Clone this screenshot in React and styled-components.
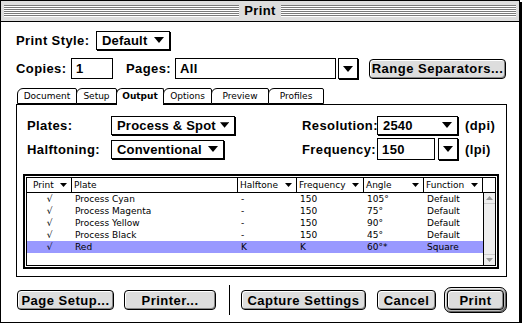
import React from "react";
import styled, { createGlobalStyle } from "styled-components";

const CHICAGO = `"Liberation Sans", Arial, sans-serif`;
const GENEVA = `"DejaVu Sans", Verdana, sans-serif`;

const GlobalStyle = createGlobalStyle`
  html, body { margin: 0; padding: 0; background: #fff; }
  * { box-sizing: border-box; }
`;

// 아래 삼각형 (팝업 / 헤더 화살표)
const Tri = ({ w = 9, h = 5, color = "#000", up }) => (
  <svg width={w} height={h} viewBox={`0 0 ${w} ${h}`} style={{ display: "block" }}>
    <polygon
      points={up ? `0,${h} ${w},${h} ${w / 2},0` : `0,0 ${w},0 ${w / 2},${h}`}
      fill={color}
    />
  </svg>
);

const Window = styled.div`
  width: 520px;
  height: 323px;
  border: 1px solid #000;
  box-shadow: 2px 2px 0 #000;
  background: #fff;
  display: flex;
  flex-direction: column;
  font-family: ${CHICAGO};
  font-weight: bold;
  font-size: 13px;
  color: #000;
`;

const TitleBar = styled.div`
  height: 21px;
  flex: none;
  background: #ddd;
  border-bottom: 1px solid #000;
  display: flex;
  align-items: center;
  padding: 0 3px;
`;

const Stripes = styled.div`
  flex: 1;
  height: 12px;
  background: repeating-linear-gradient(#7a7a7a 0 1px, #fff 1px 2px);
`;

const Title = styled.div`
  padding: 0 5px;
  font-size: 13px;
  letter-spacing: 0.4px;
  line-height: 14px;
`;

const Body = styled.div`
  flex: 1;
  display: flex;
  flex-direction: column;
  padding: 8px 12px 0 15px;
`;

const Row = styled.div`
  display: flex;
  align-items: center;
  height: ${(p) => p.$h || 21}px;
  margin-top: ${(p) => p.$mt || 0}px;
  padding-left: ${(p) => p.$pl || 0}px;
`;

const Label = styled.div`
  width: ${(p) => p.$w}px;
  flex: none;
  letter-spacing: 0.4px;
  white-space: nowrap;
`;

const Popup = styled.div`
  width: ${(p) => p.$w}px;
  height: 19px;
  flex: none;
  border: 1px solid #000;
  box-shadow: 1px 1px 0 #000;
  background: #fff;
  display: flex;
  align-items: center;
  justify-content: space-between;
  gap: 4px;
  padding: 0 5px;
  letter-spacing: 0.2px;
  white-space: nowrap;
`;

const Field = styled.div`
  width: ${(p) => p.$w}px;
  height: ${(p) => p.$h || 21}px;
  flex: none;
  border: 1px solid #000;
  background: #fff;
  display: flex;
  align-items: center;
  padding-left: 4px;
  letter-spacing: 0.4px;
`;

const ArrowBtn = styled.div`
  width: 20px;
  height: ${(p) => p.$h || 21}px;
  flex: none;
  margin-left: ${(p) => p.$ml || 2}px;
  border: 1px solid #000;
  box-shadow: 1px 1px 0 #000;
  background: #fff;
  display: flex;
  align-items: center;
  justify-content: center;
`;

const Button = styled.div`
  width: ${(p) => p.$w}px;
  height: 20px;
  flex: none;
  margin-left: ${(p) => p.$ml || 0}px;
  border: 1px solid #000;
  border-radius: 4px;
  background: #ddd;
  box-shadow: inset 1px 1px 0 #fff, inset -1px -1px 0 #888;
  display: flex;
  align-items: center;
  justify-content: center;
  letter-spacing: 0.5px;
  white-space: nowrap;
`;

const DefaultRing = styled.div`
  margin-left: ${(p) => p.$ml || 0}px;
  padding: 2px;
  border: 1px solid #000;
  border-radius: 7px;
  background: #bbb;
  box-shadow: inset 1px 1px 0 #eee, inset -1px -1px 0 #666;
`;

const Unit = styled.div`
  margin-left: 7px;
  letter-spacing: 0.4px;
`;

const Tabs = styled.div`
  display: flex;
  align-items: flex-end;
  height: 16px;
  margin-top: 9px;
  position: relative;
  z-index: 1;
`;

const Tab = styled.div`
  width: ${(p) => p.$w}px;
  height: ${(p) => (p.$active ? 17 : 16)}px;
  margin-left: -1px;
  margin-bottom: ${(p) => (p.$active ? -1 : 0)}px;
  padding-top: 2px;
  border: 1px solid #000;
  border-bottom: ${(p) => (p.$active ? "none" : "1px solid #000")};
  border-radius: 6px 2px 0 0;
  background: #fff;
  font-family: ${GENEVA};
  font-size: 9px;
  font-weight: ${(p) => (p.$active ? "bold" : "normal")};
  line-height: 11px;
  text-align: center;
  &:first-child { margin-left: 1px; }
`;

const Panel = styled.div`
  height: 173px;
  border: 1px solid #000;
  display: flex;
  flex-direction: column;
  padding-top: 10px;
`;

const LeftGroup = styled.div`
  width: 275px;
  flex: none;
  display: flex;
  align-items: center;
`;

const TableFrame = styled.div`
  width: 476px;
  margin: 14px 0 0 6px;
  border: 2px solid #000;
  padding: 1px;
`;

const TableInner = styled.div`
  border: 1px solid #000;
  font-family: ${GENEVA};
  font-weight: normal;
  font-size: 9px;
`;

const HeadRow = styled.div`
  display: flex;
  height: 15px;
  border-bottom: 1px solid #000;
`;

const HeadCell = styled.div`
  width: ${(p) => p.$w}px;
  flex: none;
  border-right: ${(p) => (p.$last ? "none" : "1px solid #000")};
  display: flex;
  align-items: center;
  justify-content: space-between;
  padding: 0 4px 0 ${(p) => p.$pl || 2}px;
  white-space: nowrap;
  overflow: hidden;
`;

const TBody = styled.div`
  display: flex;
  height: 72px;
`;

const Rows = styled.div`
  flex: 1;
  display: flex;
  flex-direction: column;
`;

const DataRow = styled.div`
  display: flex;
  height: 12px;
  align-items: center;
  background: ${(p) => (p.$sel ? "#9999ff" : "transparent")};
`;

const Cell = styled.div`
  width: ${(p) => p.$w}px;
  flex: none;
  padding-left: ${(p) => (p.$center ? 0 : 3)}px;
  text-align: ${(p) => (p.$center ? "center" : "left")};
  white-space: nowrap;
  line-height: 12px;
`;

const Scroll = styled.div`
  width: 12px;
  flex: none;
  border-left: 1px solid #000;
  background: #eee;
  display: flex;
  flex-direction: column;
  justify-content: space-between;
`;

const ScrollArrow = styled.div`
  height: 11px;
  display: flex;
  align-items: center;
  justify-content: center;
  border-${(p) => (p.$up ? "bottom" : "top")}: 1px solid #ccc;
`;

const ButtonRow = styled.div`
  display: flex;
  align-items: center;
  height: 30px;
  margin-top: 8px;
`;

const Divider = styled.div`
  width: 1px;
  height: 30px;
  background: #000;
  margin-left: 13px;
`;

const cols = [
  { key: "print", title: "Print", w: 45, pl: 6 },
  { key: "plate", title: "Plate", w: 166, noArrow: true },
  { key: "half", title: "Halftone", w: 59 },
  { key: "freq", title: "Frequency", w: 67 },
  { key: "angle", title: "Angle", w: 60 },
  { key: "func", title: "Function", w: 59 },
];

const plates = [
  { plate: "Process Cyan", half: "-", freq: "150", angle: "105°", func: "Default" },
  { plate: "Process Magenta", half: "-", freq: "150", angle: "75°", func: "Default" },
  { plate: "Process Yellow", half: "-", freq: "150", angle: "90°", func: "Default" },
  { plate: "Process Black", half: "-", freq: "150", angle: "45°", func: "Default" },
  { plate: "Red", half: "K", freq: "K", angle: "60°*", func: "Square", sel: true },
];

const tabs = [
  { name: "Document", w: 60 },
  { name: "Setup", w: 41 },
  { name: "Output", w: 48, active: true },
  { name: "Options", w: 49 },
  { name: "Preview", w: 58 },
  { name: "Profiles", w: 56 },
];

const App = () => {
  return (
    <>
      <GlobalStyle />
      <Window>
        <TitleBar>
          <Stripes />
          <Title>Print</Title>
          <Stripes />
        </TitleBar>
        <Body>
          <Row $h={20}>
            <Label $w={80}>Print Style:</Label>
            <Popup $w={74}>
              Default <Tri w={10} h={6} />
            </Popup>
          </Row>
          <Row $mt={8}>
            <Label $w={55}>Copies:</Label>
            <Field $w={42}>1</Field>
            <Label $w={49} style={{ marginLeft: 13 }}>Pages:</Label>
            <Field $w={161}>All</Field>
            <ArrowBtn>
              <Tri w={10} h={6} />
            </ArrowBtn>
            <Button $w={137} $ml={11}>Range Separators...</Button>
          </Row>

          <Tabs>
            {tabs.map((t) => (
              <Tab key={t.name} $w={t.w} $active={t.active}>
                {t.name}
              </Tab>
            ))}
          </Tabs>
          <Panel>
            <Row $h={20} $pl={10}>
              <LeftGroup>
                <Label $w={84}>Plates:</Label>
                <Popup $w={124}>
                  Process &amp; Spot <Tri w={10} h={6} />
                </Popup>
              </LeftGroup>
              <Label $w={75}>Resolution:</Label>
              <Popup $w={81}>
                2540 <Tri w={10} h={6} />
              </Popup>
              <Unit>(dpi)</Unit>
            </Row>
            <Row $h={22} $mt={3} $pl={10}>
              <LeftGroup>
                <Label $w={84}>Halftoning:</Label>
                <Popup $w={113}>
                  Conventional <Tri w={10} h={6} />
                </Popup>
              </LeftGroup>
              <Label $w={75}>Frequency:</Label>
              <Field $w={58} $h={22}>150</Field>
              <ArrowBtn $h={22} $ml={3}>
                <Tri w={10} h={6} />
              </ArrowBtn>
              <Unit>(lpi)</Unit>
            </Row>

            <TableFrame>
              <TableInner>
                <HeadRow>
                  {cols.map((c) => (
                    <HeadCell key={c.key} $w={c.w} $pl={c.pl}>
                      <span>{c.title}</span>
                      {!c.noArrow && <Tri w={7} h={4} />}
                    </HeadCell>
                  ))}
                  <HeadCell $w={12} $last />
                </HeadRow>
                <TBody>
                  <Rows>
                    {plates.map((r) => (
                      <DataRow key={r.plate} $sel={r.sel}>
                        <Cell $w={45} $center>√</Cell>
                        <Cell $w={166}>{r.plate}</Cell>
                        <Cell $w={59}>{r.half}</Cell>
                        <Cell $w={67}>{r.freq}</Cell>
                        <Cell $w={60}>{r.angle}</Cell>
                        <Cell $w={59}>{r.func}</Cell>
                      </DataRow>
                    ))}
                  </Rows>
                  <Scroll>
                    <ScrollArrow $up>
                      <Tri w={7} h={4} color="#999" up />
                    </ScrollArrow>
                    <ScrollArrow>
                      <Tri w={7} h={4} color="#999" />
                    </ScrollArrow>
                  </Scroll>
                </TBody>
              </TableInner>
            </TableFrame>
          </Panel>

          <ButtonRow>
            <Button $w={97} $ml={1}>Page Setup...</Button>
            <Button $w={92} $ml={10}>Printer...</Button>
            <Divider />
            <Button $w={125} $ml={11}>Capture Settings</Button>
            <Button $w={59} $ml={11}>Cancel</Button>
            <DefaultRing $ml={8}>
              <Button $w={57}>Print</Button>
            </DefaultRing>
          </ButtonRow>
        </Body>
      </Window>
    </>
  );
};

export default App;
